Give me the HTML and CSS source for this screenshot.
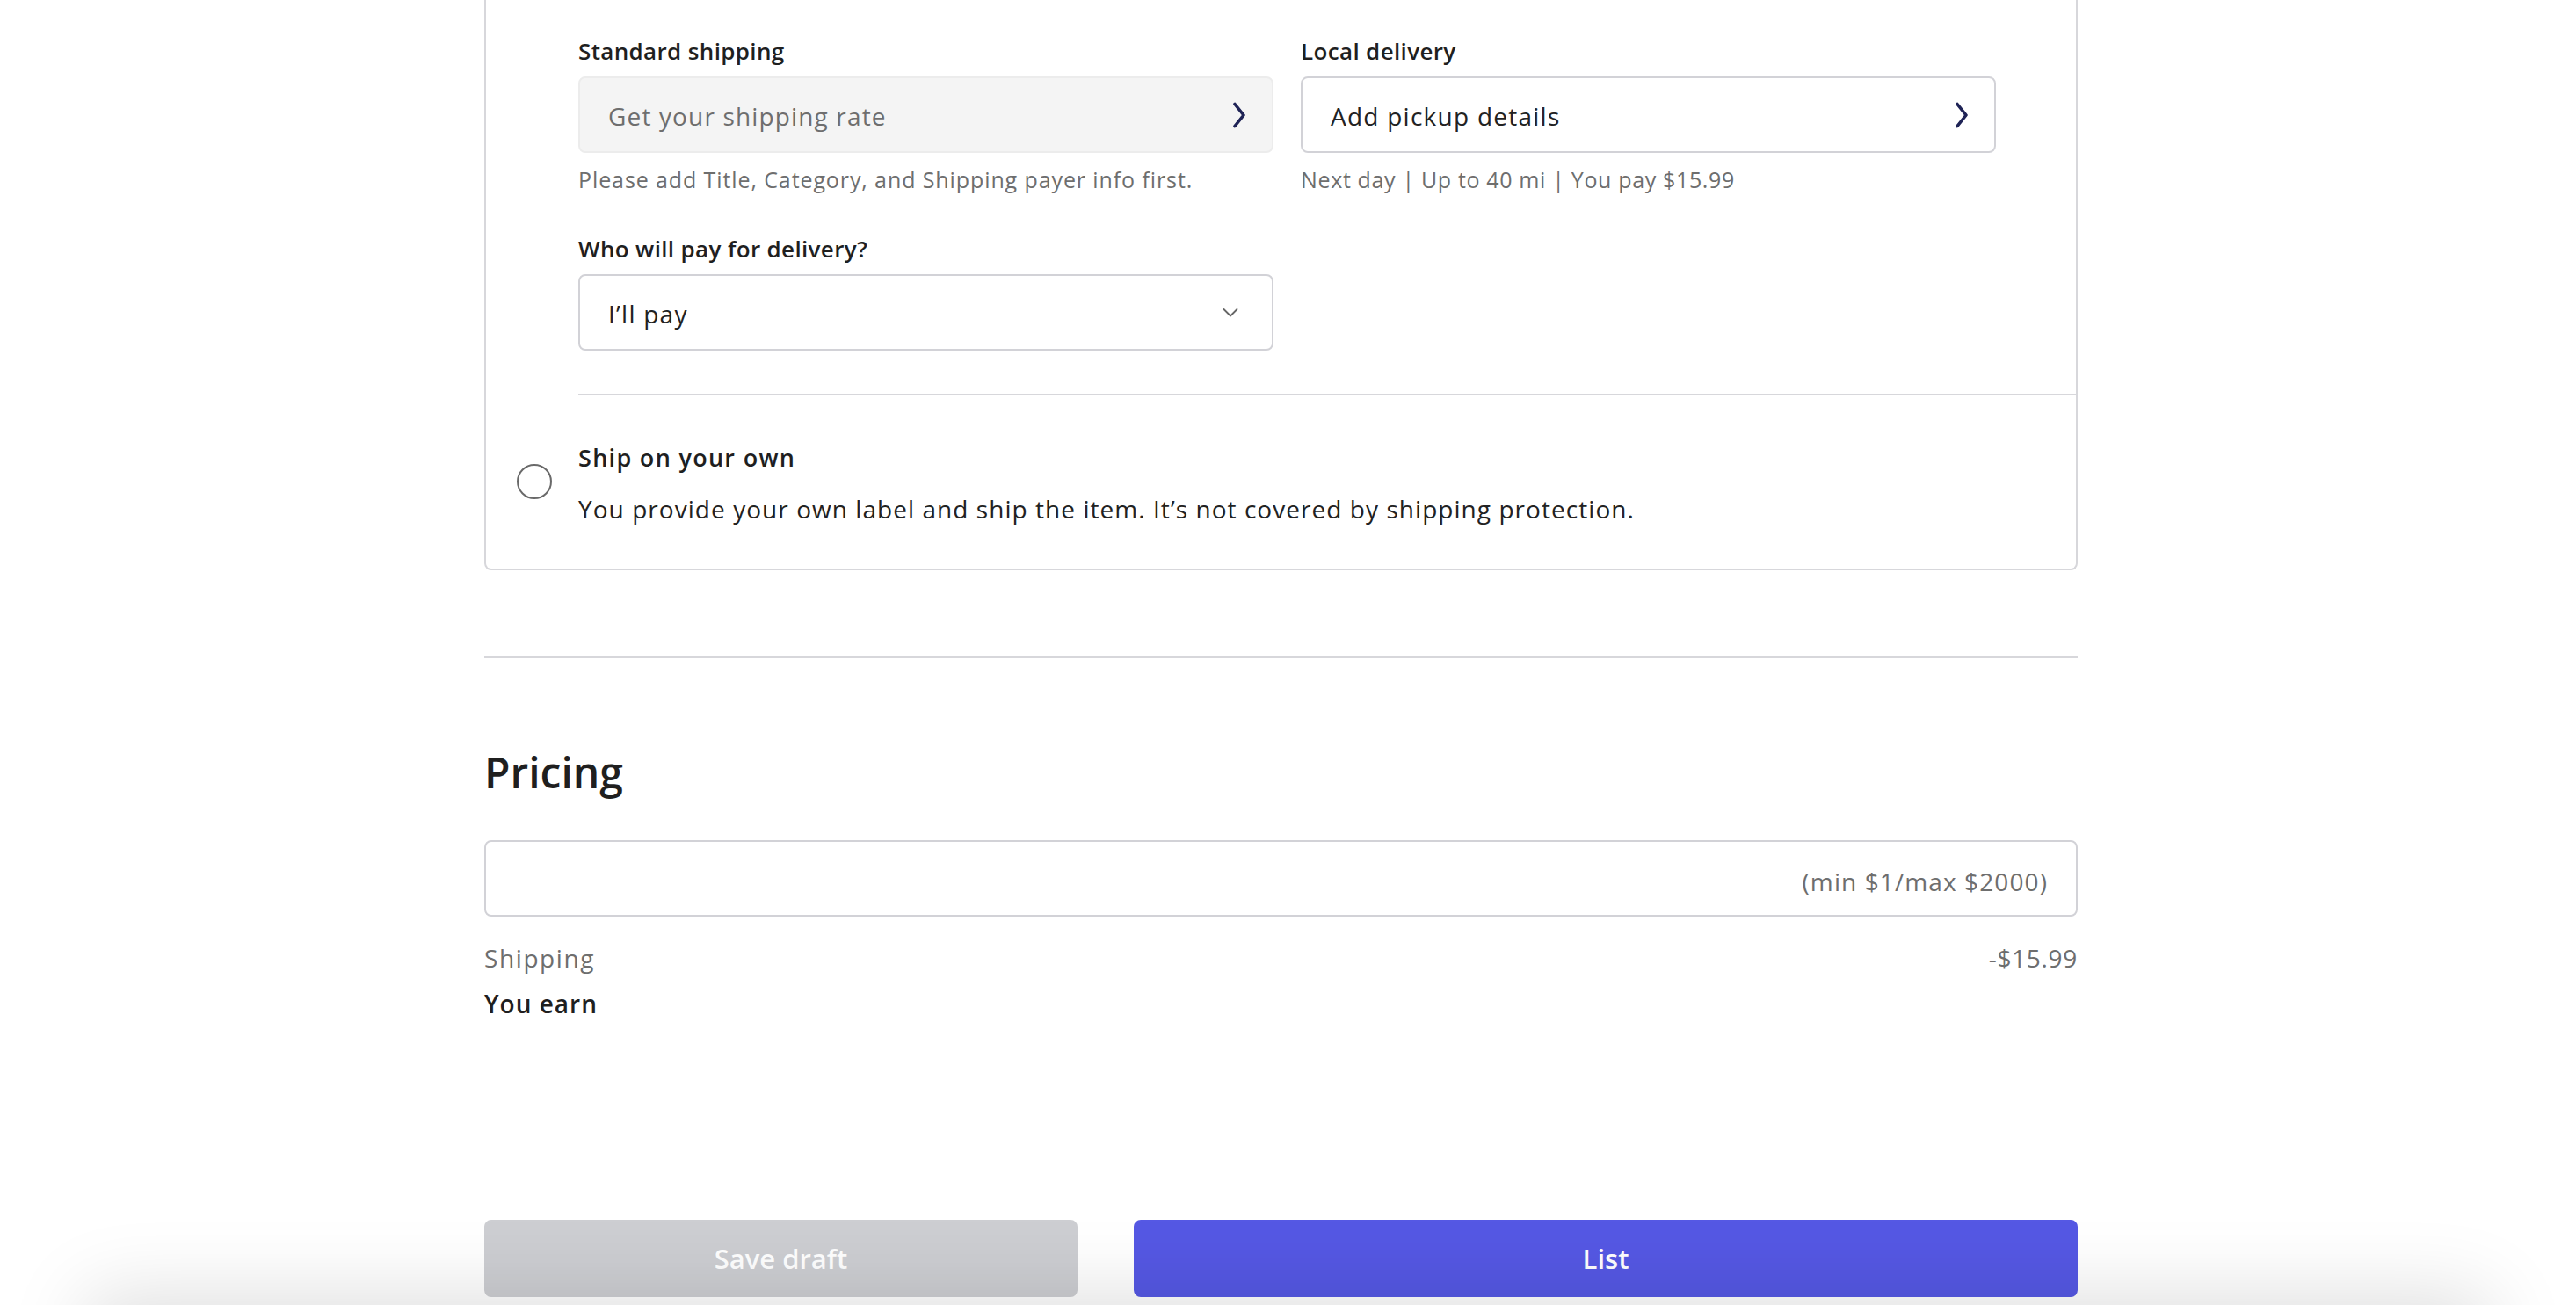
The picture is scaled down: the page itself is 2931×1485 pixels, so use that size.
FILE: index.html
```html
<!DOCTYPE html>
<html lang="en">
<head>
<meta charset="utf-8">
<title>Listing – Shipping &amp; Pricing</title>
<link rel="stylesheet" href="styles.css">
</head>
<body>
<div class="page">
  <section class="card">
    <div class="option">
      <div class="option-radio-slot"></div>
      <div class="option-body option-body--divided">
        <div class="fields">
          <div class="field">
            <div class="label">Standard shipping</div>
            <div class="box box--disabled">
              <span class="box-text box-text--muted">Get your shipping rate</span>
              <svg class="chev" width="14" height="30" viewBox="0 0 14 30"><polyline points="2,2.5 12,15 2,27.5" fill="none" stroke="#1f2356" stroke-width="3.6" stroke-linecap="round" stroke-linejoin="round"/></svg>
            </div>
            <div class="helper">Please add Title, Category, and Shipping payer info first.</div>
          </div>
          <div class="field">
            <div class="label">Local delivery</div>
            <div class="box">
              <span class="box-text">Add pickup details</span>
              <svg class="chev" width="14" height="30" viewBox="0 0 14 30"><polyline points="2,2.5 12,15 2,27.5" fill="none" stroke="#1f2356" stroke-width="3.6" stroke-linecap="round" stroke-linejoin="round"/></svg>
            </div>
            <div class="helper helper--tight">Next day | Up to 40 mi | You pay $15.99</div>
          </div>
          <div class="field field--payer">
            <div class="label">Who will pay for delivery?</div>
            <div class="box box--select">
              <span class="box-text">I’ll pay</span>
              <svg class="caret" width="18" height="12" viewBox="0 0 18 12"><polyline points="1.5,2 9,9.5 16.5,2" fill="none" stroke="#666" stroke-width="1.8" stroke-linecap="round" stroke-linejoin="round"/></svg>
            </div>
          </div>
        </div>
      </div>
    </div>
    <div class="option option--own">
      <div class="option-radio-slot"><span class="radio"></span></div>
      <div class="option-body">
        <div class="option-title">Ship on your own</div>
        <div class="option-desc">You provide your own label and ship the item. It’s not covered by shipping protection.</div>
      </div>
    </div>
  </section>

  <hr class="section-rule">

  <section class="pricing">
    <h2 class="pricing-title">Pricing</h2>
    <div class="price-input">
      <span class="price-hint">(min $1/max $2000)</span>
    </div>
    <div class="summary-row summary-row--muted">
      <span class="summary-label">Shipping</span>
      <span class="summary-value">-$15.99</span>
    </div>
    <div class="summary-row summary-row--strong">
      <span class="summary-label">You earn</span>
      <span class="summary-value"></span>
    </div>
  </section>

  <div class="actions">
    <button class="btn btn--draft" type="button">Save draft</button>
    <button class="btn btn--list" type="button">List</button>
  </div>
</div>
<div class="bottom-shade"></div>
</body>
</html>
```
FILE: styles.css
```css
* { box-sizing: border-box; }

html, body {
  margin: 0;
  padding: 0;
  background: #ffffff;
  height: 100%;
  overflow: hidden;
}

body {
  font-family: "Open Sans", "Liberation Sans", sans-serif;
  color: #222222;
  padding-right: 16px;
}

.page {
  width: 1813px;
  margin: 0 auto;
}

/* ---------- shipping card ---------- */
.card {
  border: 2px solid #d7d7db;
  border-top: none;
  border-radius: 0 0 8px 8px;
  padding-left: 35px;
}

.option {
  display: grid;
  grid-template-columns: 40px 1fr;
  column-gap: 30px;
}

.option-body--divided {
  padding-top: 41px;
  padding-bottom: 49px;
  border-bottom: 2px solid #d7d7db;
}

.fields {
  display: grid;
  grid-template-columns: 791px 791px;
  column-gap: 31px;
}

.field--payer {
  margin-top: 46px;
}

.label {
  font-size: 26px;
  line-height: 34px;
  font-weight: 600;
  color: #1f1f1f;
  letter-spacing: 0.35px;
}

.box {
  margin-top: 12px;
  height: 87px;
  border: 2px solid #d2d2d7;
  border-radius: 8px;
  background: #ffffff;
  display: flex;
  align-items: center;
  justify-content: space-between;
  padding: 3px 30px 0 32px;
}

.box--disabled {
  background: #f4f4f4;
  border-color: #ececec;
}

.box--select {
  padding-right: 38px;
}

.box-text {
  font-size: 28px;
  color: #222222;
  letter-spacing: 1.25px;
}

.box-text--muted {
  color: #6e6e6e;
  letter-spacing: 1.15px;
}

.chev { display: block; margin-top: -2px; }
.caret { display: block; margin-top: -3px; }

.helper {
  margin-top: 14px;
  font-size: 25px;
  line-height: 32px;
  color: #6e6e6e;
  letter-spacing: 0.9px;
}

.helper--tight {
  letter-spacing: 0.65px;
}

.option--own .option-body {
  padding-top: 54px;
  padding-bottom: 49px;
}

.radio {
  display: block;
  width: 40px;
  height: 40px;
  margin-top: 78px;
  border: 2px solid #6a6a6a;
  border-radius: 50%;
}

.option-title {
  font-size: 27px;
  line-height: 34px;
  font-weight: 600;
  color: #1f1f1f;
  letter-spacing: 1.3px;
}

.option-desc {
  margin-top: 22px;
  font-size: 28px;
  line-height: 38px;
  color: #222222;
  letter-spacing: 1.05px;
}

/* ---------- divider ---------- */
.section-rule {
  margin: 98px 0 0;
  border: 0;
  border-top: 2px solid #d7d7db;
  height: 0;
}

/* ---------- pricing ---------- */
.pricing-title {
  margin: 100px 0 0;
  font-size: 48px;
  line-height: 60px;
  font-weight: 600;
  color: #1f1f1f;
  letter-spacing: 0;
}

.price-input {
  margin-top: 47px;
  height: 87px;
  border: 2px solid #d2d2d7;
  border-radius: 8px;
  display: flex;
  align-items: center;
  justify-content: flex-end;
  padding: 6px 32px 0;
}

.price-hint {
  font-size: 28px;
  color: #6e6e6e;
  letter-spacing: 1.1px;
}

.summary-row {
  display: flex;
  justify-content: space-between;
  font-size: 28px;
  line-height: 36px;
}

.summary-row--muted {
  margin-top: 29px;
  color: #6e6e6e;
}

.summary-row--muted .summary-label { letter-spacing: 1.6px; }
.summary-row--muted .summary-value { letter-spacing: 0.7px; }

.summary-row--strong {
  margin-top: 16px;
  font-weight: 600;
  color: #1f1f1f;
  letter-spacing: 1px;
}

/* ---------- actions ---------- */
.actions {
  margin-top: 228px;
  display: flex;
  gap: 64px;
}

.btn {
  height: 88px;
  border: 0;
  border-radius: 8px;
  font-family: "Open Sans", "Liberation Sans", sans-serif;
  font-size: 31px;
  font-weight: 600;
  color: #ffffff;
  padding: 0;
}

.btn--draft {
  width: 675px;
  background: #cdced2;
}

.btn--list {
  flex: 1;
  background: #5558e4;
}

/* soft shadow cast from the bottom edge of the window */
.bottom-shade {
  position: fixed;
  left: 110px;
  right: 110px;
  bottom: -120px;
  height: 120px;
  box-shadow: 0 0 90px 12px rgba(0, 0, 0, 0.13);
  pointer-events: none;
}
```
